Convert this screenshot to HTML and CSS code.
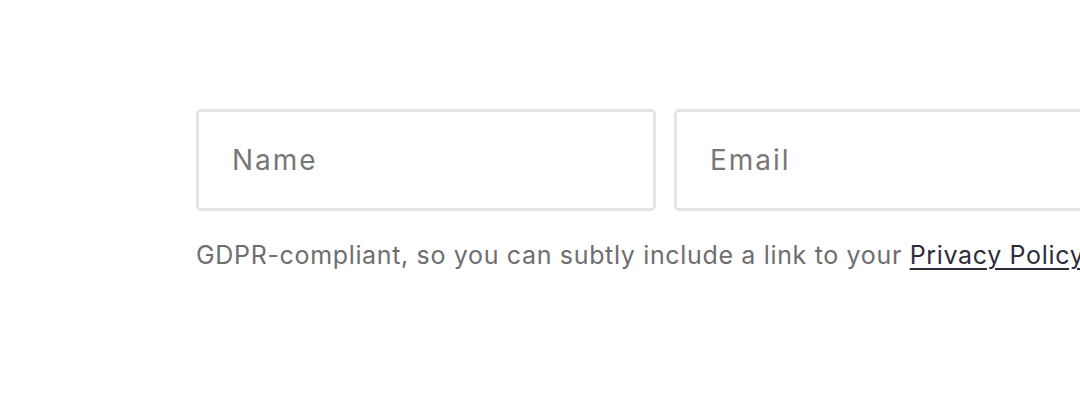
FILE: index.html
```html
<!DOCTYPE html>
<html lang="en">
<head>
<meta charset="utf-8">
<link rel="stylesheet" href="styles.css">
</head>
<body>
<main class="page">
  <form class="signup">
    <div class="fields">
      <input class="field" type="text" placeholder="Name">
      <input class="field" type="email" placeholder="Email">
    </div>
    <p class="note">GDPR-compliant, so you can subtly include a link to your <a href="#" class="link">Privacy Policy</a>.</p>
  </form>
</main>
</body>
</html>
```

FILE: styles.css
```css
html, body {
  margin: 0;
  padding: 0;
  background: #ffffff;
  overflow: hidden;
}
.page {
  width: 1080px;
  height: 412px;
  overflow: hidden;
  padding: 109px 0 0 196px;
  box-sizing: border-box;
  font-family: "Inter", "Open Sans", sans-serif;
}
.signup {
  margin: 0;
  width: 1200px;
}
.fields {
  display: flex;
  gap: 18px;
}
.field {
  flex: 0 0 auto;
  width: 460px;
  height: 102px;
  box-sizing: border-box;
  border: 3px solid #e4e4e4;
  border-radius: 5px;
  padding: 0 33px;
  font-family: inherit;
  font-size: 28px;
  letter-spacing: 2px;
  color: #333;
  background: #fff;
  outline: none;
}
.field::placeholder {
  color: #777777;
}
.note {
  margin: 29px 0 0 0;
  font-size: 25px;
  letter-spacing: 0.66px;
  color: #6e6e6e;
  white-space: nowrap;
}
.link {
  color: #2d2d3a;
  text-decoration: underline;
  text-underline-offset: 4px;
  text-decoration-thickness: 2px;
}
```
